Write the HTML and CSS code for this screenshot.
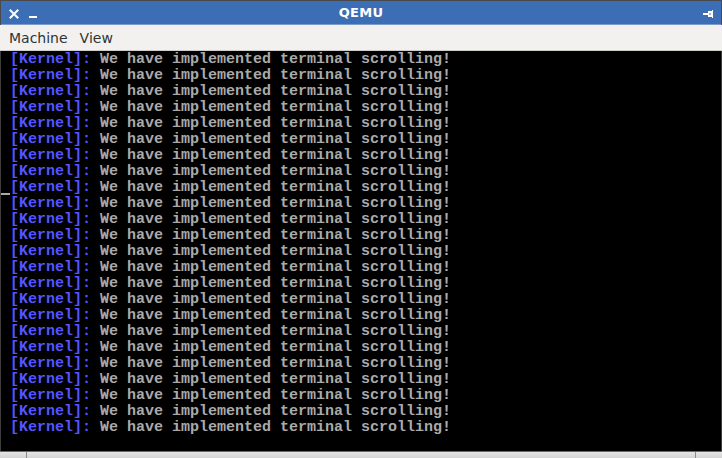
FILE: index.html
```html
<!DOCTYPE html>
<html>
<head>
<meta charset="utf-8">
<link rel="stylesheet" href="styles.css">
</head>
<body>
<div class="window">
  <div class="titlebar">
    <div class="tb-left">
      <svg class="ico" width="10" height="10" viewBox="0 0 10 10"><path d="M1.5 1.5 L8.5 8.5 M8.5 1.5 L1.5 8.5" stroke="#fff" stroke-width="2" stroke-linecap="square"/></svg>
      <svg class="ico min" width="10" height="10" viewBox="0 0 10 10"><rect x="1" y="7" width="8" height="2" fill="#fff"/></svg>
    </div>
    <div class="title">QEMU</div>
    <div class="tb-right">
      <svg width="10" height="8" viewBox="0 0 10 8"><rect x="0" y="3" width="5" height="2" fill="#fff"/><rect x="5" y="1" width="4" height="6" fill="#fff"/><rect x="9" y="0" width="1" height="8" fill="#fff"/><rect x="6" y="3" width="2" height="2" fill="#9fb7dc"/></svg>
    </div>
  </div>
  <div class="menubar">
    <span class="menu">Machine</span>
    <span class="menu">View</span>
  </div>
  <div class="term">
    <div class="row"> <b>[Kernel]:</b> We have implemented terminal scrolling!</div>
    <div class="row"> <b>[Kernel]:</b> We have implemented terminal scrolling!</div>
    <div class="row"> <b>[Kernel]:</b> We have implemented terminal scrolling!</div>
    <div class="row"> <b>[Kernel]:</b> We have implemented terminal scrolling!</div>
    <div class="row"> <b>[Kernel]:</b> We have implemented terminal scrolling!</div>
    <div class="row"> <b>[Kernel]:</b> We have implemented terminal scrolling!</div>
    <div class="row"> <b>[Kernel]:</b> We have implemented terminal scrolling!</div>
    <div class="row"> <b>[Kernel]:</b> We have implemented terminal scrolling!</div>
    <div class="row"><span class="cur"></span><b>[Kernel]:</b> We have implemented terminal scrolling!</div>
    <div class="row"> <b>[Kernel]:</b> We have implemented terminal scrolling!</div>
    <div class="row"> <b>[Kernel]:</b> We have implemented terminal scrolling!</div>
    <div class="row"> <b>[Kernel]:</b> We have implemented terminal scrolling!</div>
    <div class="row"> <b>[Kernel]:</b> We have implemented terminal scrolling!</div>
    <div class="row"> <b>[Kernel]:</b> We have implemented terminal scrolling!</div>
    <div class="row"> <b>[Kernel]:</b> We have implemented terminal scrolling!</div>
    <div class="row"> <b>[Kernel]:</b> We have implemented terminal scrolling!</div>
    <div class="row"> <b>[Kernel]:</b> We have implemented terminal scrolling!</div>
    <div class="row"> <b>[Kernel]:</b> We have implemented terminal scrolling!</div>
    <div class="row"> <b>[Kernel]:</b> We have implemented terminal scrolling!</div>
    <div class="row"> <b>[Kernel]:</b> We have implemented terminal scrolling!</div>
    <div class="row"> <b>[Kernel]:</b> We have implemented terminal scrolling!</div>
    <div class="row"> <b>[Kernel]:</b> We have implemented terminal scrolling!</div>
    <div class="row"> <b>[Kernel]:</b> We have implemented terminal scrolling!</div>
    <div class="row"> <b>[Kernel]:</b> We have implemented terminal scrolling!</div>
    <div class="row"> </div>
  </div>
  <div class="statusbar">
    <div class="seg s1"></div>
    <div class="seg s2"></div>
    <div class="seg s3"></div>
  </div>
</div>
</body>
</html>
```

FILE: styles.css
```css
html, body {
  margin: 0;
  padding: 0;
  background: #000;
}
.window {
  width: 722px;
  height: 458px;
  display: flex;
  flex-direction: column;
  background: #f2f1f0;
  overflow: hidden;
}
.titlebar {
  height: 24px;
  flex: none;
  background: #3c6eb5;
  border-top: 1px solid #4a4a4a;
  border-left: 1px solid #4a4a4a;
  border-right: 1px solid #4a4a4a;
  box-shadow: inset 0 -1px 0 #7d9ccc;
  display: flex;
  align-items: center;
}
.tb-left {
  display: flex;
  align-items: center;
  gap: 9px;
  padding-left: 8px;
  width: 100px;
  margin-top: 1px;
}
.title {
  flex: 1;
  text-align: center;
  color: #fff;
  font-family: "DejaVu Sans", sans-serif;
  font-weight: bold;
  font-size: 13px;
  letter-spacing: 0.3px;
  margin-top: -1px;
}
.tb-right {
  width: 100px;
  display: flex;
  justify-content: flex-end;
  padding-right: 8px;
  margin-top: 1px;
}
.menubar {
  height: 25px;
  flex: none;
  background: #f2f1f0;
  border-bottom: 1px solid #cfcdca;
  display: flex;
  align-items: center;
  padding-left: 9px;
  gap: 12px;
  font-family: "DejaVu Sans", sans-serif;
  font-size: 14px;
  color: #2e3436;
}
.menu {
  padding-top: 1px;
}
.term {
  flex: none;
  height: 400px;
  background: #000;
  border-left: 1px solid #3c3c3c;
  border-right: 1px solid #3c3c3c;
  font-family: "Liberation Mono", monospace;
  font-weight: bold;
  font-size: 15px;
  line-height: 16px;
  color: #aaaaaa;
}
.row {
  height: 15px;
  padding-top: 1px;
  white-space: pre;
}
.row b {
  color: #5555ff;
  font-weight: bold;
}
.cur {
  display: inline-block;
  width: 9px;
  height: 16px;
  vertical-align: top;
  background: linear-gradient(to bottom, transparent 13px, #aaaaaa 13px, #aaaaaa 15px, transparent 15px);
}
.statusbar {
  flex: 1;
  border-top: 1px solid #6a6a6a;
  display: flex;
  background: linear-gradient(#e6e6e6, #d4d4d4);
}
.seg {
  height: 100%;
}
.s1 { width: 26px; border-right: 1px solid #8a8a8a; }
.s2 { flex: 1; border-right: 1px solid #8a8a8a; }
.s3 { width: 26px; }
```
